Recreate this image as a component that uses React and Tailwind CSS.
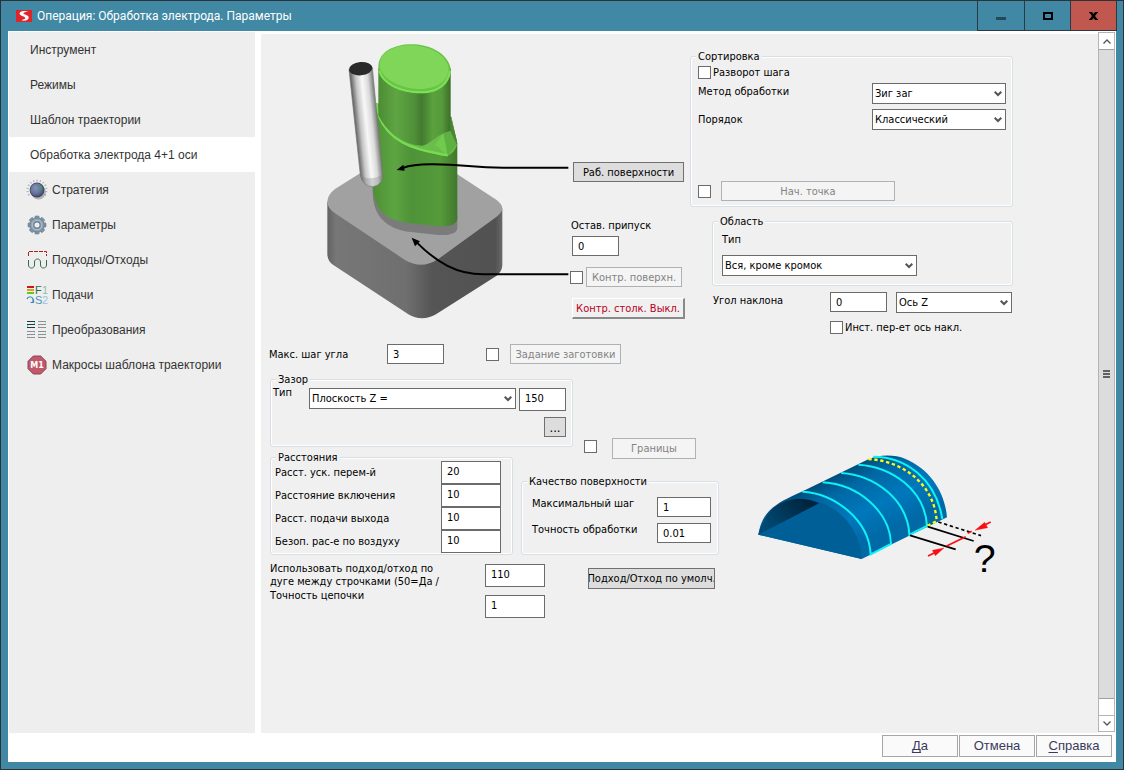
import { useState } from "react";

const navItems = [
  { id: "tool", label: "Инструмент" },
  { id: "modes", label: "Режимы" },
  { id: "template", label: "Шаблон траектории" },
  { id: "electrode", label: "Обработка электрода 4+1 оси" },
  { id: "strategy", label: "Стратегия", icon: StrategyIcon },
  { id: "params", label: "Параметры", icon: GearIcon },
  { id: "leads", label: "Подходы/Отходы", icon: LeadsIcon },
  { id: "feeds", label: "Подачи", icon: FeedsIcon },
  { id: "transforms", label: "Преобразования", icon: TransformIcon },
  { id: "macros", label: "Макросы шаблона траектории", icon: MacroIcon },
];

const distances = [
  { id: "rapid", label: "Расст. уск. перем-й", value: "20" },
  { id: "engage", label: "Расстояние включения", value: "10" },
  { id: "retract", label: "Расст. подачи выхода", value: "10" },
  { id: "air", label: "Безоп. рас-е по воздуху", value: "10" },
];

function LogoIcon() {
  return (
    <svg width="16" height="12" viewBox="0 0 48 36" aria-hidden="true">
      <rect width="48" height="36" fill="#e0242b" />
      <path
        d="M36 5C24 1 9 4 11 12c2 7 17 7 17 12 0 4-8 4-12 7 10 3 23 0 22-9-1-8-16-8-16-12 0-3 8-4 14-5z"
        fill="#fff"
      />
    </svg>
  );
}

function StrategyIcon() {
  const ticks = [-210, -190, -170, -150, -130, -110, -90, -70, -50, -30, -10, 10, 30];
  return (
    <svg width="22" height="22" viewBox="0 0 22 22" aria-hidden="true">
      <defs>
        <radialGradient id="knob" cx="0.4" cy="0.35" r="0.7">
          <stop offset="0" stopColor="#8593b8" />
          <stop offset="0.6" stopColor="#65739c" />
          <stop offset="1" stopColor="#3c4668" />
        </radialGradient>
      </defs>
      {ticks.map((a) => (
        <line
          key={a}
          x1="19.5"
          y1="11"
          x2="21.5"
          y2="11"
          stroke="#aaa"
          transform={`rotate(${a} 11 11)`}
        />
      ))}
      <circle cx="12.5" cy="13" r="7.4" fill="#8a8a8a" opacity="0.6" />
      <circle cx="11" cy="11" r="7.4" fill="#3a415a" />
      <circle cx="11" cy="11" r="6.7" fill="url(#knob)" />
      <ellipse cx="14.5" cy="9" rx="1.2" ry="1.6" fill="#2db52d" />
    </svg>
  );
}

function GearIcon() {
  const teeth = [0, 45, 90, 135, 180, 225, 270, 315];
  return (
    <svg width="22" height="22" viewBox="0 0 22 22" aria-hidden="true">
      {teeth.map((a) => (
        <rect
          key={a}
          x="8.8"
          y="2"
          width="4.4"
          height="5"
          rx="1"
          fill="#7d93a6"
          stroke="#66798a"
          strokeWidth="0.6"
          transform={`rotate(${a} 11 11)`}
        />
      ))}
      <circle cx="11" cy="11" r="6.9" fill="#8fa4b5" stroke="#6c8093" strokeWidth="0.8" />
      <circle cx="11" cy="11" r="5.2" fill="#a9bac8" />
      <circle cx="11" cy="11" r="3.2" fill="#eee" stroke="#6c8093" strokeWidth="1.4" />
    </svg>
  );
}

function LeadsIcon() {
  return (
    <svg width="22" height="22" viewBox="0 0 22 22" fill="none" aria-hidden="true">
      <path d="M2.5 7V2.5H20.5V7" stroke="#a82020" strokeDasharray="4 1" />
      <path
        d="M2.5 11v5c0 4 6 4 6 0v-3c0-4 6-4 6 0v3c0 4 6 4 6 0v-5"
        stroke="#2f6b4c"
      />
    </svg>
  );
}

function FeedsIcon() {
  return (
    <svg width="22" height="22" viewBox="0 0 22 22" aria-hidden="true">
      <rect x="1" y="2" width="7" height="2" fill="#c8171e" />
      <rect x="1" y="5" width="7" height="2" fill="#d9a11c" />
      <rect x="1" y="8" width="7" height="2" fill="#5ccb1e" />
      <g fontFamily="Liberation Sans, sans-serif" fontSize="11">
        <text x="9" y="10" fill="#2f6b4c">F</text>
        <text x="16" y="10" fill="#8fbfa4">1</text>
        <text x="9" y="20" fill="#4f93bd">S</text>
        <text x="16" y="20" fill="#9dc3dc">2</text>
      </g>
      <path d="M1 15c1-3 5-3 6 0v3M4.5 18.5h3v-3" fill="none" stroke="#3c86b3" strokeWidth="1.2" />
    </svg>
  );
}

function TransformIcon() {
  return (
    <svg width="22" height="22" viewBox="0 0 22 22" fill="none" aria-hidden="true">
      <path d="M1 2.5h8M1 5.5h8M1 8.5h8" stroke="#26383c" />
      <path d="M8.5 3v2M1.5 6v2" stroke="#2ee6ea" />
      <path
        d="M12 2.5h8M12 5.5h8M12 8.5h8M1 12.5h8M1 15.5h8M1 18.5h8M12 12.5h8M12 15.5h8M12 18.5h8"
        stroke="#8f8f8f"
      />
      <path d="M19.5 3v2M12.5 6v2M8.5 13v2M1.5 16v2M19.5 13v2M12.5 16v2" stroke="#9fe9ea" />
    </svg>
  );
}

function MacroIcon() {
  return (
    <svg width="22" height="22" viewBox="0 0 22 22" aria-hidden="true">
      <path
        d="M7.3 2h7.400L20 7.300v7.400L14.700 20H7.300L2 14.700V7.300z"
        fill="#c0596a"
        stroke="#8f4552"
      />
      <text
        x="11"
        y="14"
        fill="#fff"
        fontFamily="DejaVu Sans, sans-serif"
        fontSize="8"
        fontWeight="bold"
        textAnchor="middle"
      >
        M1
      </text>
    </svg>
  );
}

// electrode on its base with the tool and the two leader arrows
function ElectrodeDrawing() {
  return (
    <svg
      className="ml-[57px] shrink-0"
      width="243"
      height="276"
      viewBox="48 27 729 828"
      aria-hidden="true"
    >
      <defs>
        <linearGradient id="baseSide" gradientUnits="userSpaceOnUse" x1="52" y1="0" x2="577" y2="0">
          <stop offset="0" stopColor="#636363" />
          <stop offset="0.05" stopColor="#777" />
          <stop offset="0.45" stopColor="#6f6f6f" />
          <stop offset="0.6" stopColor="#555" />
          <stop offset="0.96" stopColor="#525252" />
          <stop offset="1" stopColor="#6a6a6a" />
        </linearGradient>
        <linearGradient id="upperBody" gradientUnits="userSpaceOnUse" x1="205" y1="0" x2="422" y2="0">
          <stop offset="0" stopColor="#4c8c34" />
          <stop offset="0.25" stopColor="#5fa543" />
          <stop offset="0.5" stopColor="#4f9038" />
          <stop offset="0.6" stopColor="#437a30" />
          <stop offset="0.75" stopColor="#5aa23d" />
          <stop offset="0.88" stopColor="#569a3b" />
          <stop offset="1" stopColor="#3b6e29" />
        </linearGradient>
        <linearGradient id="lowerBody" gradientUnits="userSpaceOnUse" x1="190" y1="0" x2="442" y2="0">
          <stop offset="0" stopColor="#4f9036" />
          <stop offset="0.25" stopColor="#5da541" />
          <stop offset="0.45" stopColor="#4f9238" />
          <stop offset="0.8" stopColor="#559b3a" />
          <stop offset="1" stopColor="#41772d" />
        </linearGradient>
        <linearGradient id="toolBody" gradientUnits="userSpaceOnUse" x1="134" y1="270" x2="204" y2="263">
          <stop offset="0" stopColor="#5a5a5a" />
          <stop offset="0.25" stopColor="#c6c6c6" />
          <stop offset="0.5" stopColor="#f8f8f8" />
          <stop offset="0.75" stopColor="#dadada" />
          <stop offset="1" stopColor="#747474" />
        </linearGradient>
      </defs>

      <path
        d="M52 500V660Q54 680 70 690L295 838Q335 862 378 838L560 722Q577 708 577 690V520L335 520Z"
        fill="url(#baseSide)"
      />
      <path
        d="M52 500Q52 480 75 462L155 412L300 320L442 418L560 495Q577 508 577 520Q577 532 560 545L385 672Q335 705 285 675L75 535Q52 518 52 500Z"
        fill="#a1a1a1"
      />

      <path
        d="M188 455C186 510 200 545 235 569Q265 588 310 592L385 600Q442 602 442 578V540L190 440Z"
        fill="#7b7b7b"
      />
      <path
        d="M198 205L188 455C193 500 205 530 235 546Q265 561 300 565L385 574Q442 576 442 548V325L424 245Z"
        fill="url(#lowerBody)"
      />
      <path
        d="M198 205C200 270 250 325 330 346C360 354 395 362 412 363Q432 355 441 330L424 245L400 290L330 325L215 240Z"
        fill="#69bd48"
      />
      <path d="M400 293L421 288L441 328L413 362Z" fill="#5eb040" />
      <path d="M400 293L375 330L413 362Z" fill="#6fca4d" />
      <path d="M422 245L441 318V330L421 288Z" fill="#4a8534" />
      <path
        d="M200 205C203 265 245 320 330 343C350 348 395 358 413 361"
        fill="none"
        stroke="#78dc53"
        strokeWidth="7"
      />
      <path
        d="M205 100V240C225 285 275 330 335 332C360 330 375 300 422 287V100Z"
        fill="url(#upperBody)"
      />
      <path d="M205 95C206 5 400 5 422 100C422 150 385 175 335 175C270 175 207 140 205 95Z" fill="#68c346" />
      <path d="M208 108C218 145 270 172 335 172C385 171 415 145 420 108" fill="none" stroke="#7ae355" strokeWidth="6" />
      <path d="M209 90C212 8 395 12 416 98C416 140 380 160 330 162C270 162 210 130 209 90Z" fill="#7fd659" />

      <path
        d="M117 103L151 420Q158 455 190 455Q220 448 218 418L187 98Z"
        fill="url(#toolBody)"
        stroke="#777"
        strokeWidth="2"
      />
      <path d="M152 422Q185 440 218 418Q218 448 190 455Q158 453 152 422Z" fill="#777" opacity="0.3" />
      <ellipse cx="152" cy="101" rx="35" ry="20" transform="rotate(-5 152 101)" fill="#2a2a2a" />

      <g fill="none" stroke="#000" strokeWidth="6">
        <path d="M775 398H580C480 398 470 388 370 388Q310 387 278 399" />
        <path d="M775 718H520C440 718 380 682 320 622" />
      </g>
      <path d="M260 405L280 389L284 407Z" />
      <path d="M305 608L330 619L315 634Z" />
    </svg>
  );
}

// half cylinder with tool passes and the step dimension
function StepDrawing() {
  return (
    <svg
      className="mt-[82px] ml-[38px] shrink-0"
      width="250"
      height="140"
      viewBox="36 45 750 420"
      aria-hidden="true"
    >
      <defs>
        <linearGradient id="shell" gradientUnits="userSpaceOnUse" x1="250" y1="90" x2="360" y2="310">
          <stop offset="0" stopColor="#00436b" />
          <stop offset="0.3" stopColor="#0068a5" />
          <stop offset="0.65" stopColor="#0078bc" />
          <stop offset="1" stopColor="#0069a6" />
        </linearGradient>
        <linearGradient id="shellInside" gradientUnits="userSpaceOnUse" x1="180" y1="180" x2="70" y2="270">
          <stop offset="0" stopColor="#00253d" />
          <stop offset="1" stopColor="#004a75" />
        </linearGradient>
      </defs>
      <path
        d="M40 284C50 215 90 190 170 155L370 58C400 43 450 43 480 56C560 90 600 160 606 232L350 357Z"
        fill="url(#shell)"
      />
      <path d="M40 284C60 215 100 178 165 176C270 178 345 260 350 357Z" fill="#005f97" />
      <path d="M40 284C60 215 100 178 165 176C188 177 205 181 222 190Z" fill="url(#shellInside)" />
      <g fill="none" stroke="#0ff2f5" strokeWidth="6">
        <path d="M172 155C270 160 372 240 377 343L438 312C435 215 340 133 233 127" />
        <path d="M288 99C390 105 488 180 493 284L546 258C540 150 440 80 340 74" />
        <path d="M385 50C480 50 572 115 592 237" />
      </g>
      <path
        d="M370 57C470 62 568 130 575 243L542 260"
        fill="none"
        stroke="#fdfd10"
        strokeWidth="7"
        strokeDasharray="10 8"
      />
      <g fill="none" stroke="#000" strokeWidth="5">
        <path d="M495 286L632 328" />
        <path d="M548 260L686 303" />
        <path d="M580 246L708 287" strokeDasharray="10 8" />
      </g>
      <g stroke="#fb0d12" strokeWidth="5" fill="#fb0d12">
        <path d="M605 318L662 290" />
        <path d="M668 280L680 274" />
        <path d="M737 246L715 257" />
        <path d="M549 348L572 337" />
        <path d="M690 271L719 247L728 263Z" strokeWidth="1" />
        <path d="M597 324L562 331L571 347Z" strokeWidth="1" />
      </g>
      <text x="686" y="396" fontFamily="Liberation Sans, sans-serif" fontSize="118">
        ?
      </text>
    </svg>
  );
}

function Group({ title, className, bodyClass, children }) {
  return (
    <fieldset
      className={`rounded-[3px] border border-[#d5dfe5] shadow-[inset_0_0_0_1px_#fff] ${className}`}
    >
      <legend className="ml-[5px] bg-[#f0f0f0] px-0.5">{title}</legend>
      <div className={bodyClass}>{children}</div>
    </fieldset>
  );
}

function TextInput({ className, ...props }) {
  return (
    <input
      type="text"
      className={`border border-[#6b6b6b] bg-white px-[5px] outline-none ${className}`}
      {...props}
    />
  );
}

function Check(props) {
  return (
    <input
      type="checkbox"
      className="size-[13px] shrink-0 appearance-none border border-[#6b6b6b] bg-white checked:bg-[#4088a3]"
      {...props}
    />
  );
}

function Select({ className, options, ...props }) {
  return (
    <div className={`relative shrink-0 ${className}`}>
      <select
        className="h-[21px] w-full appearance-none border border-[#6b6b6b] bg-white pr-5 pl-0.5 outline-none"
        {...props}
      >
        {options.map((o) => (
          <option key={o}>{o}</option>
        ))}
      </select>
      <svg
        className="pointer-events-none absolute top-2 right-1"
        width="8"
        height="6"
        viewBox="0 0 8 6"
        fill="none"
        aria-hidden="true"
      >
        <path d="M0.7 0.7L4 4L7.3 0.7" stroke="#555" strokeWidth="2" />
      </svg>
    </div>
  );
}

function Button({ className, children, ...props }) {
  return (
    <button
      type="button"
      className={`flex shrink-0 items-center justify-center overflow-hidden border border-[#707070] bg-[#dddddd] whitespace-nowrap disabled:border-[#adb2b5] disabled:bg-[#f4f4f4] disabled:text-[#838383] ${className}`}
      {...props}
    >
      {children}
    </button>
  );
}

function TitleBar() {
  return (
    <header className="flex h-[30px] items-stretch bg-[#4088a3]">
      <div className="flex flex-1 items-center gap-[5px] pl-[15px]">
        <LogoIcon />
        <h1 className="font-['Roboto',sans-serif] text-[12px] text-white">
          Операция: Обработка электрода. Параметры
        </h1>
      </div>
      <div className="mr-1.5 flex border-l border-b border-[#2b3a42]">
        <button
          type="button"
          aria-label="Свернуть"
          className="flex w-[47px] items-center justify-center border-r border-[#2b3a42]"
        >
          <svg width="10" height="10" viewBox="0 0 10 10" aria-hidden="true">
            <rect y="6" width="10" height="3" fill="#24495a" />
          </svg>
        </button>
        <button
          type="button"
          aria-label="Развернуть"
          className="flex w-[46px] items-center justify-center border-r border-[#2b3a42]"
        >
          <svg width="10" height="8" viewBox="0 0 10 8" fill="none" aria-hidden="true">
            <rect x="1" y="1" width="8" height="6" stroke="#000" strokeWidth="2" />
          </svg>
        </button>
        <button
          type="button"
          aria-label="Закрыть"
          className="flex w-[46px] items-center justify-center border-r border-[#2b3a42] bg-[#c15850]"
        >
          <svg width="9" height="8" viewBox="0 0 9 8" fill="none" aria-hidden="true">
            <path d="M1.5 0L7.5 8M7.5 0L1.5 8" stroke="#000" strokeWidth="2.4" />
            <path d="M0 0.5h3M6 0.5h3M0 7.5h3M6 7.5h3" stroke="#000" />
          </svg>
        </button>
      </div>
    </header>
  );
}

function Sidebar({ active, onSelect }) {
  return (
    <nav className="w-[246px] shrink-0 bg-[#eeeeee] font-['Liberation_Sans',Arial,sans-serif] text-[12px] text-[#333]">
      {navItems.map(({ id, label, icon: Icon }) => (
        <button
          key={id}
          type="button"
          onClick={() => onSelect(id)}
          className={`flex h-[35px] w-full items-center gap-1 text-left ${
            Icon ? "pl-[17px]" : "pl-[21px]"
          } ${active === id ? "bg-white" : ""}`}
        >
          {Icon && <Icon />}
          {label}
        </button>
      ))}
    </nav>
  );
}

function ScrollBar() {
  return (
    <div className="flex w-[17px] shrink-0 flex-col border border-[#b4b4b4] bg-white">
      <button type="button" aria-label="Вверх" className="flex h-4 items-center justify-center">
        <svg width="8" height="5" viewBox="0 0 8 5" fill="none" aria-hidden="true">
          <path d="M0.5 4.5L4 1L7.5 4.5" stroke="#555" strokeWidth="1.3" />
        </svg>
      </button>
      <div className="flex flex-1 flex-col items-center justify-center gap-px border-y border-[#a0a0a0] bg-[#dcdcdc]">
        <span className="h-0.5 w-[7px] bg-[#606060]" />
        <span className="h-0.5 w-[7px] bg-[#606060]" />
        <span className="h-0.5 w-[7px] bg-[#606060]" />
      </div>
      <div className="h-4" />
      <button
        type="button"
        aria-label="Вниз"
        className="flex h-4 items-center justify-center border-t border-[#b4b4b4]"
      >
        <svg width="8" height="5" viewBox="0 0 8 5" fill="none" aria-hidden="true">
          <path d="M0.5 0.5L4 4L7.5 0.5" stroke="#555" strokeWidth="1.3" />
        </svg>
      </button>
    </div>
  );
}

function SurfacesColumn() {
  return (
    <div className="mt-[118px] w-[121px] shrink-0 pl-px">
      <Button className="ml-[3px] h-5 w-[111px]">Раб. поверхности</Button>
      <label htmlFor="stock" className="mt-[37px] ml-px block">
        Остав. припуск
      </label>
      <TextInput id="stock" defaultValue="0" className="mt-1 ml-0.5 block h-5 w-[47px]" />
      <div className="mt-[11px] flex items-center gap-[3px]">
        <Check aria-label="Контр. поверхн." />
        <Button disabled className="h-5 w-[96px]">
          Контр. поверхн.
        </Button>
      </div>
      <button
        type="button"
        className="mt-[11px] ml-0.5 flex h-[21px] w-[113px] items-center justify-center border-t border-l border-r-2 border-b-2 border-t-white border-r-[#8a8a8a] border-b-[#8a8a8a] border-l-white whitespace-nowrap text-[#b8001c]"
      >
        Контр. столк. Выкл.
      </button>
    </div>
  );
}

function SortingColumn() {
  return (
    <div className="mt-1.5 w-[323px] shrink-0">
      <Group title="Сортировка" className="h-[157px]" bodyClass="pr-1.5 pl-[7px]">
        <div className="mt-[3px] flex items-center gap-0.5">
          <Check id="reverse" />
          <label htmlFor="reverse">Разворот шага</label>
        </div>
        <div className="mt-1 flex items-start justify-between">
          <label htmlFor="method" className="mt-0.5">Метод обработки</label>
          <Select id="method" className="w-[134px]" options={["Зиг заг", "В одну сторону"]} />
        </div>
        <div className="mt-[5px] flex items-center justify-between">
          <label htmlFor="order">Порядок</label>
          <Select id="order" className="w-[134px]" options={["Классический", "По областям"]} />
        </div>
        <div className="mt-[51px] flex items-center gap-[10px]">
          <Check aria-label="Нач. точка" />
          <Button disabled className="h-5 w-[174px]">
            Нач. точка
          </Button>
        </div>
      </Group>

      <Group title="Область" className="mt-2 ml-[22px] h-[71px]" bodyClass="pt-[5px] pl-[9px]">
        <label htmlFor="areaType" className="block">
          Тип
        </label>
        <Select
          id="areaType"
          className="mt-[9px] w-[195px]"
          options={["Вся, кроме кромок", "Полная"]}
        />
      </Group>

      <div className="mt-1.5 ml-[23px] flex items-start">
        <label htmlFor="tilt" className="mt-0.5 w-[117px]">Угол наклона</label>
        <TextInput id="tilt" defaultValue="0" className="h-5 w-[57px]" />
        <Select
          aria-label="Ось наклона"
          className="ml-[9px] w-[116px]"
          options={["Ось Z", "Ось X", "Ось Y"]}
        />
      </div>
      <div className="mt-2 ml-[140px] flex items-center gap-0.5">
        <Check id="cross" />
        <label htmlFor="cross">Инст. пер-ет ось накл.</label>
      </div>
    </div>
  );
}

function ParametersForm() {
  return (
    <form className="flex-1 bg-[#f0f0f0] px-2 pt-2.5 pb-4 font-['DejaVu_Sans_Condensed','DejaVu_Sans',sans-serif] text-[11px] leading-[13px] text-black">
      <div className="flex items-start">
        <ElectrodeDrawing />
        <SurfacesColumn />
        <SortingColumn />
      </div>

      <div className="mt-2.5 flex items-center">
        <label htmlFor="angleStep" className="w-[118px]">Макс. шаг угла</label>
        <TextInput id="angleStep" defaultValue="3" className="h-5 w-[57px]" />
        <div className="ml-[42px] flex items-center gap-[11px]">
          <Check aria-label="Задание заготовки" />
          <Button disabled className="h-5 w-[111px]">
            Задание заготовки
          </Button>
        </div>
      </div>

      <div className="mt-[9px] flex items-start">
        <div className="w-[450px] shrink-0 pl-px">
          <div className="flex items-end">
            <Group title="Зазор" className="mb-3 h-[74px] w-[303px] shrink-0" bodyClass="pr-1.5 pl-0.5">
              <div className="flex items-start">
                <label htmlFor="clearance" className="w-9">Тип</label>
                <Select
                  id="clearance"
                  className="mt-0.5 w-[207px]"
                  options={["Плоскость Z =", "Цилиндр"]}
                />
                <TextInput
                  aria-label="Зазор Z"
                  defaultValue="150"
                  className="mt-0.5 ml-[3px] h-[23px] w-[47px] pb-0.5"
                />
              </div>
              <Button aria-label="Выбрать" className="mt-1.5 ml-auto h-5 w-[22px] text-[13px]">
                ...
              </Button>
            </Group>
            <div className="ml-[11px] flex items-start gap-[15px]">
              <span className="mt-0.5 flex">
                <Check aria-label="Границы" />
              </span>
              <Button disabled className="h-[21px] w-[84px]">
                Границы
              </Button>
            </div>
          </div>

          <div className="-mt-2 flex items-end gap-2">
            <Group
              title="Расстояния"
              className="h-[104px] w-[243px] shrink-0"
              bodyClass="-mt-[3px] pr-[11px] pl-1"
            >
              {distances.map((d) => (
                <div key={d.id} className="flex items-center justify-between">
                  <label htmlFor={d.id}>{d.label}</label>
                  <TextInput
                    id={d.id}
                    defaultValue={d.value}
                    className="h-[23px] w-[60px] pb-0.5"
                  />
                </div>
              ))}
            </Group>
            <Group
              title="Качество поверхности"
              className="h-20 w-[198px] shrink-0"
              bodyClass="flex flex-col gap-1.5 pt-[9px] pr-[7px] pl-2.5"
            >
              <div className="flex items-start justify-between">
                <label htmlFor="maxStep">Максимальный шаг</label>
                <TextInput id="maxStep" defaultValue="1" className="h-5 w-[54px]" />
              </div>
              <div className="flex items-start justify-between">
                <label htmlFor="accuracy">Точность обработки</label>
                <TextInput id="accuracy" defaultValue="0.01" className="h-5 w-[54px]" />
              </div>
            </Group>
          </div>

          <div className="mt-[7px] flex items-start">
            <div className="w-[215px]">
              <label htmlFor="arcLead" className="block w-[175px]">
                Использовать подход/отход по дуге между строчками (50=Да /
              </label>
              <label htmlFor="chain" className="mt-px block">
                Точность цепочки
              </label>
            </div>
            <div className="mt-0.5 flex flex-col gap-2">
              <TextInput id="arcLead" defaultValue="110" className="h-[23px] w-[60px] pb-0.5" />
              <TextInput id="chain" defaultValue="1" className="h-[23px] w-[60px] pb-0.5" />
            </div>
            <Button className="mt-1.5 ml-[43px] h-[21px] w-[127px]">
              Подход/Отход по умолч.
            </Button>
          </div>
        </div>
        <StepDrawing />
      </div>
    </form>
  );
}

function Footer() {
  const button =
    "h-[22px] w-[76px] border border-[#a6a6a6] bg-[#fafafa] text-[#3a3a5c]";
  const hotkey = "underline underline-offset-2 [text-decoration-skip-ink:none]";
  return (
    <footer className="flex justify-end gap-px bg-white pt-0.5 pr-1 pb-[5px] font-['Liberation_Sans',Arial,sans-serif] text-[13px]">
      <button type="button" className={button}>
        <span className={hotkey}>Д</span>а
      </button>
      <button type="button" className={button}>
        Отмена
      </button>
      <button type="button" className={button}>
        <span className={hotkey}>С</span>правка
      </button>
    </footer>
  );
}

const App = () => {
  const [active, setActive] = useState("electrode");

  return (
    <div className="flex min-h-screen flex-col border border-[#2b3238] bg-[#4088a3] pb-[7px]">
      <TitleBar />
      <div className="mr-[7px] ml-[7px] flex flex-1 flex-col border-t border-l border-white bg-white">
        <div className="flex flex-1">
          <Sidebar active={active} onSelect={setActive} />
          <main className="ml-1.5 flex min-w-0 flex-1 pt-0.5">
            <ParametersForm />
          </main>
          <div className="mr-px flex pb-px">
            <ScrollBar />
          </div>
        </div>
        <Footer />
      </div>
    </div>
  );
};

export default App;
